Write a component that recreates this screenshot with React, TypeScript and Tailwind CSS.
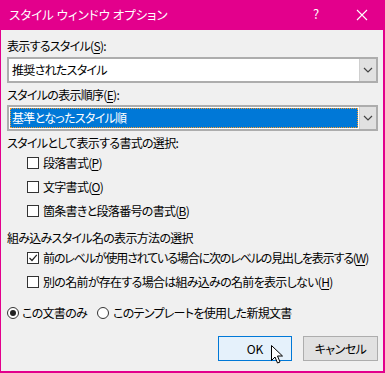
import React from "react";

const U = ({ c }: { c: string }) => <span className="underline underline-offset-2 decoration-1">{c}</span>;

const Chevron = () => (
  <svg width="10" height="6" viewBox="0 0 10 6" className="block">
    <path d="M1 1 L5 5 L9 1" fill="none" stroke="#444" strokeWidth="1.2" />
  </svg>
);

const Box = ({ checked }: { checked?: boolean }) => (
  <span className="w-[12px] h-[12px] border border-[#333] bg-white flex items-center justify-center shrink-0">
    {checked && (
      <svg width="10" height="10" viewBox="0 0 10 10">
        <path d="M1.5 5 L4 7.5 L8.8 1.8" fill="none" stroke="#222" strokeWidth="1.2" />
      </svg>
    )}
  </span>
);

const Radio = ({ on }: { on?: boolean }) => (
  <span className="w-[12px] h-[12px] rounded-full border border-[#333] bg-white flex items-center justify-center shrink-0">
    {on && <span className="w-[6px] h-[6px] rounded-full bg-[#222]" />}
  </span>
);

export default function App() {
  return (
    <div className="w-[385px] h-[373px] bg-[#e3008c] flex flex-col font-['Noto_Sans_CJK_JP',sans-serif] [font-feature-settings:'palt'] text-[12px] leading-[16px] text-black overflow-hidden whitespace-nowrap">
      {/* title bar */}
      <div className="h-[30px] shrink-0 flex items-center text-white pl-[9px] relative">
        <span className="text-[12.5px]">スタイル ウィンドウ オプション</span>
        <span className="absolute left-[313px] top-[6px] text-[13px]">?</span>
        <svg className="absolute left-[356px] top-[9px]" width="12" height="12" viewBox="0 0 12 12">
          <path d="M1 1 L11 11 M11 1 L1 11" stroke="white" strokeWidth="1.1" />
        </svg>
      </div>
      {/* body */}
      <div className="flex-1 ml-[1px] mr-[2px] mb-[2px] bg-[#f0f0f0] flex flex-col pl-[6px] pt-[8px] relative tracking-[-0.7px]">
        <div className="h-[16px]">表示するスタイル(<U c="S" />):</div>
        <div className="mt-[3px] h-[26px] w-[371px] border-2 border-[#adadad] bg-white flex">
          <div className="flex-1 flex items-center pl-[3px]">推奨されたスタイル</div>
          <div className="w-[17px] bg-[#e1e1e1] border-l border-[#cfcfcf] flex items-center justify-center">
            <Chevron />
          </div>
        </div>
        <div className="mt-[4px] h-[16px]">スタイルの表示順序(<U c="E" />):</div>
        <div className="mt-[2px] h-[26px] w-[371px] border-2 border-[#adadad] bg-white flex">
          <div className="flex-1 flex items-center p-[1px]">
            <div className="w-full h-full bg-[#0078d7] border border-dotted border-[#f49a2c] text-white flex items-center pl-[1px]">
              基準となったスタイル順
            </div>
          </div>
          <div className="w-[17px] bg-[#e1e1e1] border-l border-[#cfcfcf] flex items-center justify-center">
            <Chevron />
          </div>
        </div>
        <div className="mt-[4px] h-[16px]">スタイルとして表示する書式の選択:</div>
        <div className="h-[24px] flex items-center pl-[20px] gap-[4px]">
          <Box />
          <span>段落書式(<U c="P" />)</span>
        </div>
        <div className="h-[24px] flex items-center pl-[20px] gap-[4px]">
          <Box />
          <span>文字書式(<U c="O" />)</span>
        </div>
        <div className="h-[24px] flex items-center pl-[20px] gap-[4px]">
          <Box />
          <span>箇条書きと段落番号の書式(<U c="B" />)</span>
        </div>
        <div className="mt-[7px] h-[16px]">組み込みスタイル名の表示方法の選択</div>
        <div className="h-[24px] flex items-center pl-[20px] gap-[4px]">
          <Box checked />
          <span className="tracking-[-1.15px]">前のレベルが使用されている場合に次のレベルの見出しを表示する(<U c="W" />)</span>
        </div>
        <div className="h-[24px] flex items-center pl-[20px] gap-[4px]">
          <Box />
          <span>別の名前が存在する場合は組み込みの名前を表示しない(<U c="H" />)</span>
        </div>
        <div className="mt-[7px] h-[24px] flex items-center">
          <div className="flex items-center gap-[3px]">
            <Radio on />
            <span>この文書のみ</span>
          </div>
          <div className="flex items-center gap-[4px] ml-[10px]">
            <Radio />
            <span>このテンプレートを使用した新規文書</span>
          </div>
        </div>
        <div className="mt-[11px] flex justify-end gap-[11px] pr-[5px] tracking-normal">
          <div className="w-[74px] h-[25px] bg-[#e5f1fb] border border-[#0078d7] flex items-center justify-center">OK</div>
          <div className="w-[75px] h-[25px] bg-[#e1e1e1] border border-[#adadad] flex items-center justify-center tracking-[-0.5px]">キャンセル</div>
        </div>
        <svg className="absolute left-[270px] top-[315px]" width="14" height="20" viewBox="0 0 14 20">
          <path d="M0.5 0.5 L0.5 15.5 L4 12 L6.5 18 L9 17 L6.5 11 L11.5 11 Z" fill="white" stroke="black" strokeWidth="1" strokeLinejoin="round" />
        </svg>
      </div>
    </div>
  );
}
